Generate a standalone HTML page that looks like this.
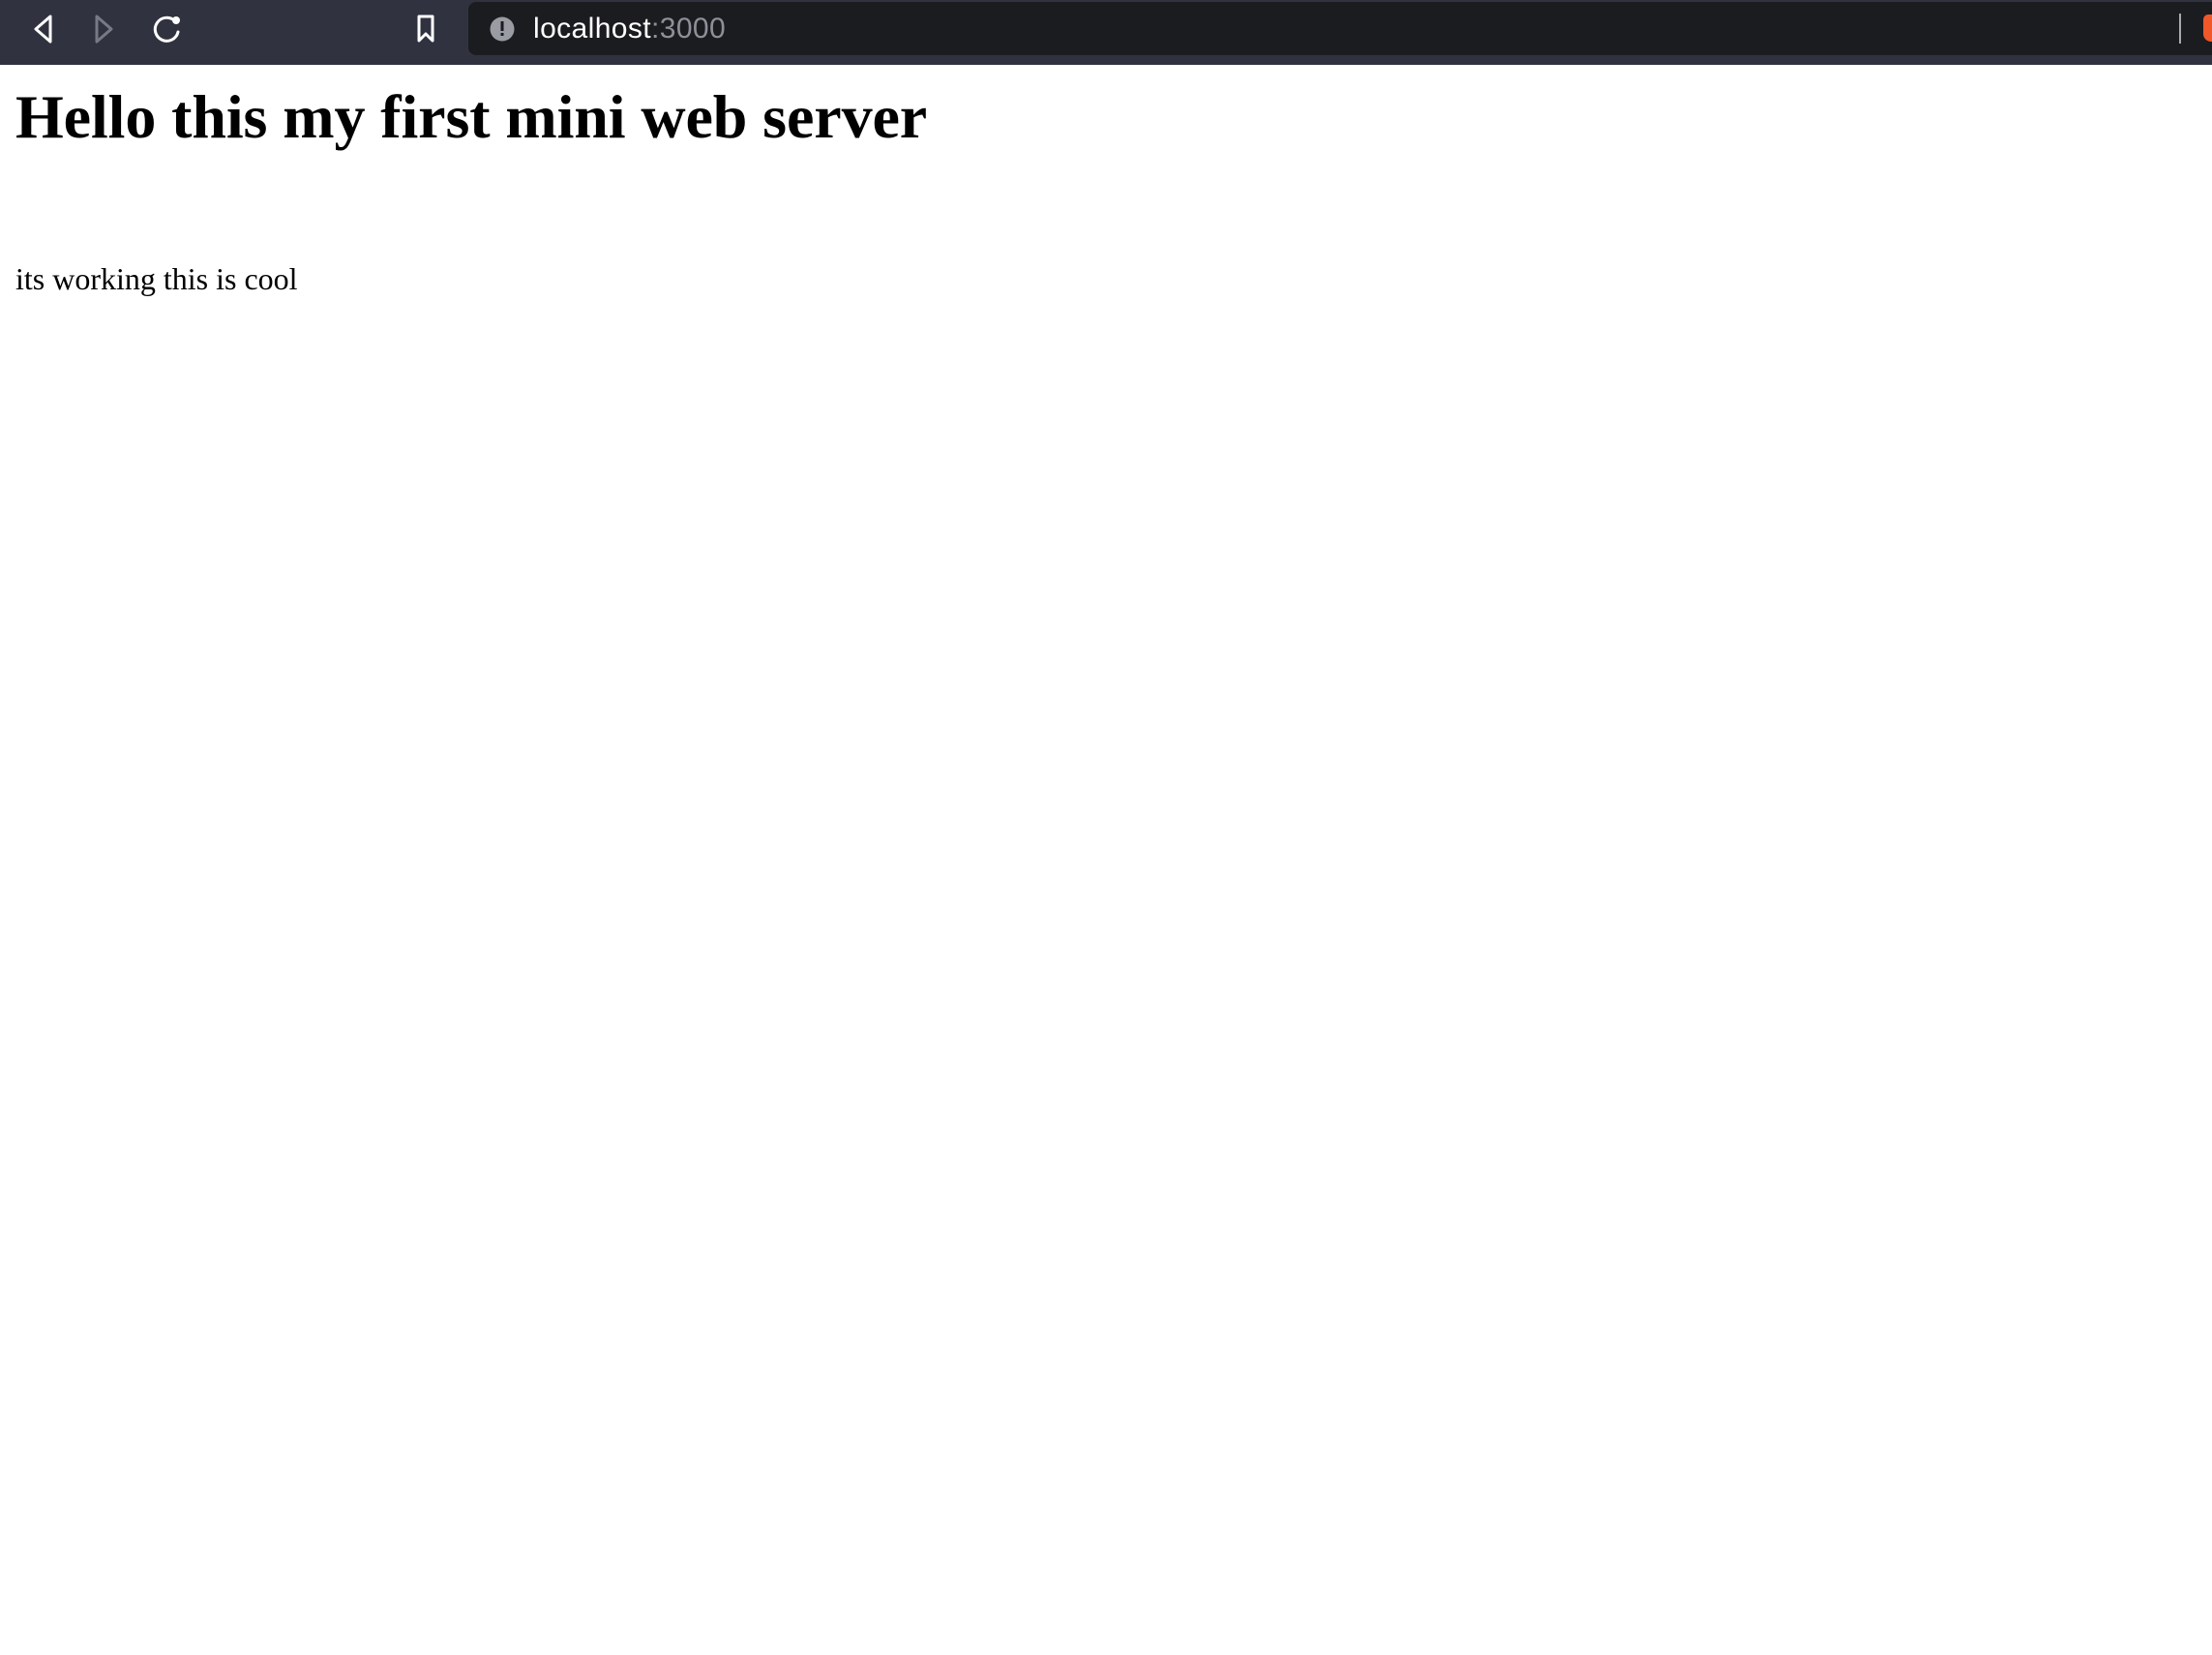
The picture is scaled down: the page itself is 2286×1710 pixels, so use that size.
<!DOCTYPE html>
<html><head><style>
html,body{margin:0;padding:0;background:#fff;width:2286px;height:1710px;overflow:hidden;position:relative}
.tb{position:absolute;left:0;top:0;width:2286px;height:67px;background:#30333f}
.addr{position:absolute;left:484px;top:2px;width:1802px;height:55px;background:#1b1c20;border-radius:8px 0 0 8px}
.url{position:absolute;left:551px;top:13px;font:30px "Liberation Sans",sans-serif;color:#fff;line-height:34px;letter-spacing:0.4px}
.url span{color:#8e9099}
h1{position:absolute;left:16px;top:89px;margin:0;font:bold 64px "Liberation Serif",serif;line-height:64px;color:#000;white-space:nowrap;letter-spacing:-0.1px}
p{position:absolute;left:16px;top:272px;margin:0;font:32px "Liberation Serif",serif;line-height:32px;color:#000;white-space:nowrap}
</style></head><body>
<div class="tb"></div>
<div class="addr"></div>
<svg style="position:absolute;left:0;top:0" width="800" height="67">
<path d="M52 17 L37 30 L52 43 Z" fill="none" stroke="#fff" stroke-width="3" stroke-linejoin="round"/>
<path d="M100 17 L115 30 L100 43 Z" fill="none" stroke="#777a85" stroke-width="3" stroke-linejoin="round"/>
<path d="M181 22 A12 12 0 1 0 184 33" fill="none" stroke="#fff" stroke-width="3" stroke-linecap="round"/>
<circle cx="182" cy="21" r="4" fill="#fff"/>
<path d="M433 17 L447 17 L447 42 L440 35 L433 42 Z" fill="none" stroke="#fff" stroke-width="3" stroke-linejoin="round"/>
<circle cx="519" cy="30" r="12.5" fill="#9a9ca3"/>
<rect x="517.5" y="22" width="3" height="10" fill="#1b1c20"/>
<rect x="517.5" y="34" width="3" height="3" fill="#1b1c20"/>
</svg>
<div class="url">localhost<span>:3000</span></div>
<div style="position:absolute;left:2252px;top:14px;width:2px;height:31px;background:#aaa"></div>
<div style="position:absolute;left:2277px;top:15px;width:14px;height:28px;background:#f0582a;border-radius:5px 0 0 8px"></div>
<h1>Hello this my first mini web server</h1>
<p>its working this is cool</p>
</body></html>
